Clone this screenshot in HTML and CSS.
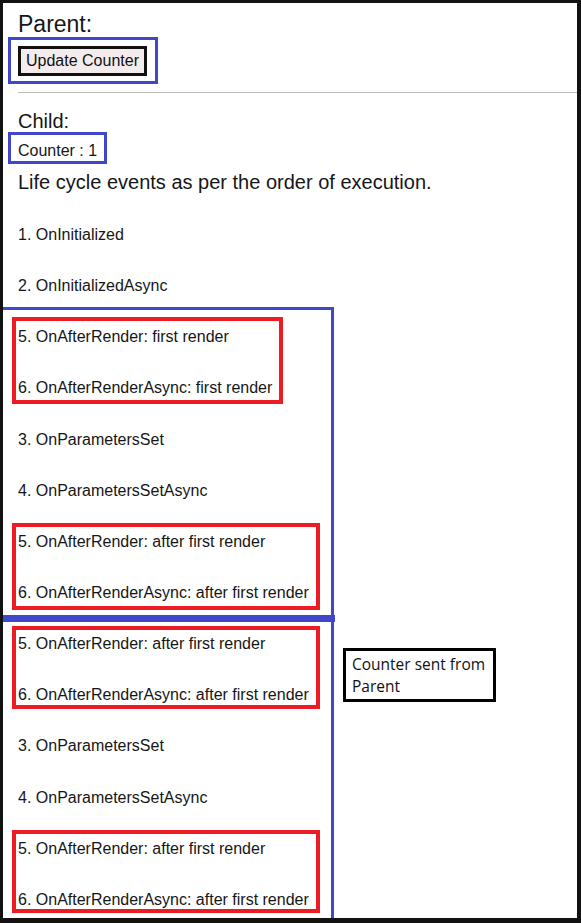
FILE: index.html
```html
<!DOCTYPE html>
<html lang="en">
<head>
<meta charset="utf-8">
<title>Blazor lifecycle</title>
<link rel="stylesheet" href="styles.css">
</head>
<body>
<div class="screen">
  <div class="title-parent">Parent:</div>
  <div class="mark-blue box-btn"><button class="btn" type="button">Update Counter</button></div>
  <hr class="rule">
  <div class="title-child">Child:</div>
  <div class="mark-blue box-counter">Counter : 1</div>
  <div class="lead">Life cycle events as per the order of execution.</div>
  <p class="ev ev-first">1. OnInitialized</p>
  <p class="ev ev-next">2. OnInitializedAsync</p>
  <div class="split">
    <div class="flow">
      <div class="mark-red r1">
        <p class="ev">5. OnAfterRender: first render</p>
        <p class="ev ev-next">6. OnAfterRenderAsync: first render</p>
      </div>
      <p class="ev ev-loose ev-after-red">3. OnParametersSet</p>
      <p class="ev ev-loose ev-next">4. OnParametersSetAsync</p>
      <div class="mark-red wide r2">
        <p class="ev">5. OnAfterRender: after first render</p>
        <p class="ev ev-next">6. OnAfterRenderAsync: after first render</p>
      </div>
      <div class="divider"></div>
      <div class="mark-red wide r3">
        <p class="ev">5. OnAfterRender: after first render</p>
        <p class="ev ev-next">6. OnAfterRenderAsync: after first render</p>
      </div>
      <p class="ev ev-loose ev-after-red2">3. OnParametersSet</p>
      <p class="ev ev-loose ev-next">4. OnParametersSetAsync</p>
      <div class="mark-red wide r4">
        <p class="ev">5. OnAfterRender: after first render</p>
        <p class="ev ev-next">6. OnAfterRenderAsync: after first render</p>
      </div>
    </div>
    <div class="note">Counter sent from<br>Parent</div>
  </div>
</div>
</body>
</html>
```

FILE: styles.css
```css
html {
  background: #121212;
}
body {
  margin: 0;
  background: #121212;
  font-family: "Liberation Sans", Arial, sans-serif;
  color: #161616;
}
.screen {
  margin: 3px 4px 0 3px;
  height: 915px;
  overflow: hidden;
  background: #ffffff;
  padding: 8px 0 0 15px;
  box-sizing: border-box;
  display: flex;
  flex-direction: column;
  align-items: flex-start;
}
.title-parent {
  font-size: 23px;
  line-height: 26px;
}
.mark-blue {
  border: 3px solid #3f48cc;
}
.box-btn {
  margin-left: -10px;
  padding: 6px 8px 5px 7px;
  display: flex;
}
.btn {
  width: 129px;
  height: 30px;
  box-sizing: border-box;
  border: 3px solid #111111;
  background: #f4ecec;
  font-family: "Liberation Sans", Arial, sans-serif;
  font-size: 16px;
  color: #111111;
  padding: 0;
  margin: 0;
}
.rule {
  align-self: stretch;
  margin: 8px 0 0 0;
  border: 0;
  border-top: 1px solid #bcbcbc;
  height: 0;
}
.title-child {
  font-size: 20px;
  line-height: 22px;
  margin-top: 17px;
}
.box-counter {
  margin-left: -10px;
  padding: 6.5px 7px 1.5px 7px;
  font-size: 16px;
  line-height: 18px;
}
.lead {
  font-size: 20px;
  line-height: 23px;
  margin-top: 7.4px;
}
.ev {
  margin: 0;
  font-size: 16px;
  line-height: 18px;
  white-space: nowrap;
}
.ev-first {
  margin-top: 31.6px;
}
.ev-next {
  margin-top: 33.15px;
}
.split {
  margin-left: -15px;
  margin-top: 11.85px;
  display: flex;
  align-items: flex-start;
}
.flow {
  width: 331px;
  box-sizing: border-box;
  border-top: 3px solid #3f48cc;
  border-right: 3px solid #3f48cc;
  padding-bottom: 40px;
  display: flex;
  flex-direction: column;
  align-items: flex-start;
}
.mark-red {
  border: 4px solid #ed1c24;
  margin-left: 9px;
  padding-left: 2px;
  box-sizing: border-box;
}
.r1 {
  width: 271px;
  margin-top: 7px;
  padding-top: 7.3px;
  padding-bottom: 2.55px;
}
.wide {
  width: 308px;
}
.r2 {
  margin-top: 23.25px;
  padding-top: 5.9px;
  padding-bottom: 3.95px;
}
.r3 {
  margin-top: 4px;
  padding-top: 5.2px;
  padding-bottom: 0.65px;
}
.r4 {
  margin-top: 23.35px;
  padding-top: 5.8px;
  padding-bottom: 0.05px;
}
.ev-loose {
  padding-left: 15px;
}
.ev-after-red {
  margin-top: 26.6px;
}
.ev-after-red2 {
  margin-top: 28.5px;
}
.divider {
  margin-top: 5px;
  height: 7px;
  width: calc(100% + 4px);
  background: #3f48cc;
}
.note {
  margin-left: 9px;
  margin-top: 341px;
  width: 153px;
  height: 54px;
  box-sizing: border-box;
  border: 3px solid #000000;
  padding: 2.2px 0 0 6px;
  font-family: "Open Sans", "Noto Sans", sans-serif;
  font-size: 15.5px;
  line-height: 22px;
  color: #111111;
  white-space: nowrap;
}
```
